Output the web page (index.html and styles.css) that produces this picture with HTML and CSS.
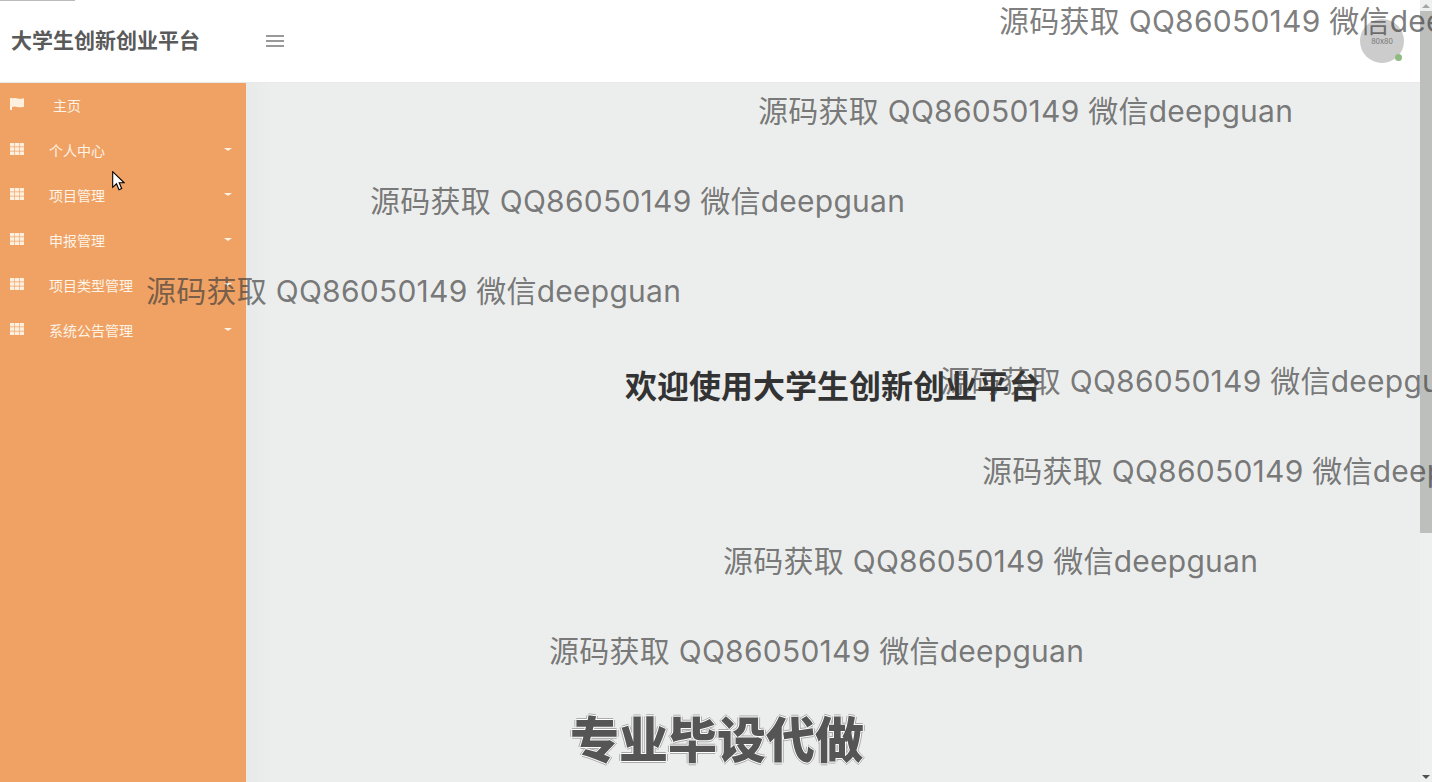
FILE: index.html
```html
<!DOCTYPE html>
<html lang="zh-CN">
<head>
    <meta charset="UTF-8">
    <title>大学生创新创业平台</title>
    <link rel="stylesheet" href="styles.css">
</head>
<body>
    <svg class="sprite" width="0" height="0">
        <symbol id="icon-th" viewBox="0 0 14 12">
            <path d="M0 0h4.300v3.600H0zM4.900 0h4.200v3.600H4.900zM9.700 0H14v3.600H9.700zM0 4.200h4.300v3.600H0zM4.900 4.200h4.200v3.600H4.900zM9.700 4.200H14v3.600H9.700zM0 8.400h4.300V12H0zM4.900 8.400h4.200V12H4.900zM9.700 8.400H14V12H9.700z"/>
        </symbol>
    </svg>

    <div class="page">
        <header class="topbar">
            <div class="brand">大学生创新创业平台</div>
            <button class="toggle"><span></span><span></span><span></span></button>
            <div class="avatar">80x80<i class="online"></i></div>
        </header>
        <div class="main">
            <nav class="sidebar">
                <a class="nav-item home">
                    <svg class="nav-icon" viewBox="0 0 14 12"><path d="M0 0h2v12H0zM2 .5c2-.8 3.800-.6 5.500 0 1.800.5 3.800.5 6.500-.3v8.500c-2.700.8-4.700.8-6.500.3-1.700-.6-3.500-.8-5.500 0z"/></svg>
                    <span>主页</span>
                </a>
                <a class="nav-item"><svg class="nav-icon"><use href="#icon-th"/></svg><span>个人中心</span><b class="caret"></b></a>
                <a class="nav-item"><svg class="nav-icon"><use href="#icon-th"/></svg><span>项目管理</span><b class="caret"></b></a>
                <a class="nav-item"><svg class="nav-icon"><use href="#icon-th"/></svg><span>申报管理</span><b class="caret"></b></a>
                <a class="nav-item"><svg class="nav-icon"><use href="#icon-th"/></svg><span>项目类型管理</span><b class="caret"></b></a>
                <a class="nav-item"><svg class="nav-icon"><use href="#icon-th"/></svg><span>系统公告管理</span><b class="caret"></b></a>
            </nav>
            <main class="content">
                <h2 class="welcome">欢迎使用大学生创新创业平台</h2>
            </main>
        </div>
    </div>

    <div class="scrollbar">
        <i class="arrow up"></i>
        <div class="thumb"></div>
        <i class="arrow down"></i>
    </div>

    <div class="pace"></div>

    <!-- watermark layer over everything -->
    <div class="watermarks">
        <p class="wm wm-1">源码获取 QQ86050149 微信deepguan</p>
        <p class="wm wm-2">源码获取 QQ86050149 微信deepguan</p>
        <p class="wm wm-3">源码获取 QQ86050149 微信deepguan</p>
        <p class="wm wm-4">源码获取 QQ86050149 微信deepguan</p>
        <p class="wm wm-5">源码获取 QQ86050149 微信deepguan</p>
        <p class="wm wm-6">源码获取 QQ86050149 微信deepguan</p>
        <p class="wm wm-7">源码获取 QQ86050149 微信deepguan</p>
        <p class="wm wm-8">源码获取 QQ86050149 微信deepguan</p>
        <p class="wm wm-big">专业毕设代做</p>
    </div>

    <svg class="cursor" viewBox="0 0 13 20" width="13" height="20">
        <path d="M.7.7v15.600l3.800-3.500 2.500 5.900 2.700-1.200-2.500-5.700h5z" fill="#fff" stroke="#000" stroke-width="1.100"/>
    </svg>
</body>
</html>
```

FILE: styles.css
```css
* {
    margin: 0;
    padding: 0;
    box-sizing: border-box;
}

body {
    width: 1432px;
    height: 782px;
    overflow: hidden;
    position: relative;
    display: flex;
    background: #eceeed;
    font-family: "Noto Sans CJK SC", "Open Sans", sans-serif;
    color: #555;
}

.sprite {
    position: absolute;
}

.page {
    width: 1420px;
    display: flex;
    flex-direction: column;
}

/* Top bar */
.topbar {
    height: 83px;
    flex: none;
    display: flex;
    align-items: center;
    background: #fff;
    border-bottom: 1px solid #e8e9e8;
}

.brand {
    width: 246px;
    padding: 0 0 4px 11px;
    font-size: 21px;
    font-weight: 700;
    color: #5a5a5a;
    white-space: nowrap;
}

.toggle {
    width: 18px;
    margin-left: 20px;
    display: flex;
    flex-direction: column;
    gap: 3px;
    border: 0;
    background: none;
}

.toggle span {
    height: 2px;
    background: #999;
}

.avatar {
    position: relative;
    width: 44px;
    height: 44px;
    margin-left: auto;
    margin-right: 16px;
    border-radius: 50%;
    background: #ccc;
    color: #777;
    font-size: 8px;
    line-height: 44px;
    text-align: center;
}

.online {
    position: absolute;
    right: 2px;
    bottom: 2px;
    width: 7px;
    height: 7px;
    border-radius: 50%;
    background: #8fbb80;
}

.main {
    flex: 1;
    display: flex;
    min-height: 0;
}

/* Sidebar */
.sidebar {
    width: 246px;
    flex: none;
    background: #f0a264;
}

.nav-item {
    height: 45px;
    display: flex;
    align-items: center;
    padding: 0 14px 0 10px;
    color: #fdf3e6;
    font-size: 14px;
}

.nav-icon {
    width: 14px;
    height: 12px;
    flex: none;
    margin-top: -4px;
    fill: #fdf0df;
}

.nav-item span {
    margin-left: 25px;
    margin-top: -2px;
}

.home span {
    margin-left: 29px;
}

.caret {
    margin-left: auto;
    margin-top: -2px;
    border-top: 3px solid #fdf3e6;
    border-left: 4px solid transparent;
    border-right: 4px solid transparent;
}

/* Content */
.content {
    flex: 1;
    padding-top: 277px;
    background: linear-gradient(to right, #e8eae9, #eceeed 26px);
}

.welcome {
    font-size: 32px;
    line-height: 48px;
    font-weight: 700;
    text-align: center;
    color: #333;
}

/* Fake browser scrollbar */
.scrollbar {
    width: 12px;
    display: flex;
    flex-direction: column;
    align-items: center;
    background: #eef0ef;
    margin-left: auto;
}

.thumb {
    width: 100%;
    height: 522px;
    background: #bdbfbc;
}

.arrow {
    border-left: 4px solid transparent;
    border-right: 4px solid transparent;
}

.arrow.up {
    margin: 4px 0 3px;
    border-bottom: 4px solid #a5a5a5;
}

.arrow.down {
    margin-top: auto;
    margin-bottom: 3px;
    border-top: 4px solid #505050;
}

.pace {
    position: absolute;
    top: 0;
    left: 0;
    width: 75px;
    height: 1px;
    background: #bbb;
}

/* Watermarks */
.watermarks {
    position: absolute;
    top: -24px;
    left: 0;
    width: 1432px;
    height: 806px;
    overflow: hidden;
    pointer-events: none;
}

.wm {
    height: 90px;
    font-size: 30px;
    line-height: 90px;
    letter-spacing: 0.25px;
    white-space: nowrap;
    color: rgba(60, 60, 60, 0.68);
    font-family: "Inter", "Noto Sans CJK SC", sans-serif;
}

.wm-1 { margin-left: 999px; }
.wm-2 { margin-left: 758px; }
.wm-3 { margin-left: 370px; }
.wm-4 { margin-left: 146px; }
.wm-5 { margin-left: 940px; }
.wm-6 { margin-left: 982px; }
.wm-7 { margin-left: 723px; }
.wm-8 { margin-left: 549px; }

.wm-big {
    margin-left: 570px;
    margin-top: -4px;
    font-size: 49px;
    font-weight: 900;
    letter-spacing: 0;
    color: #555;
    font-family: "Noto Sans CJK SC", sans-serif;
    text-shadow: 1px 0 0 #fff, -1px 0 0 #fff, 0 1px 0 #fff, 0 -1px 0 #fff,
        2px 0 0 #aaa, -2px 0 0 #aaa, 0 2px 0 #aaa, 0 -2px 0 #aaa;
}

.cursor {
    position: absolute;
    left: 112px;
    top: 171px;
}
```
